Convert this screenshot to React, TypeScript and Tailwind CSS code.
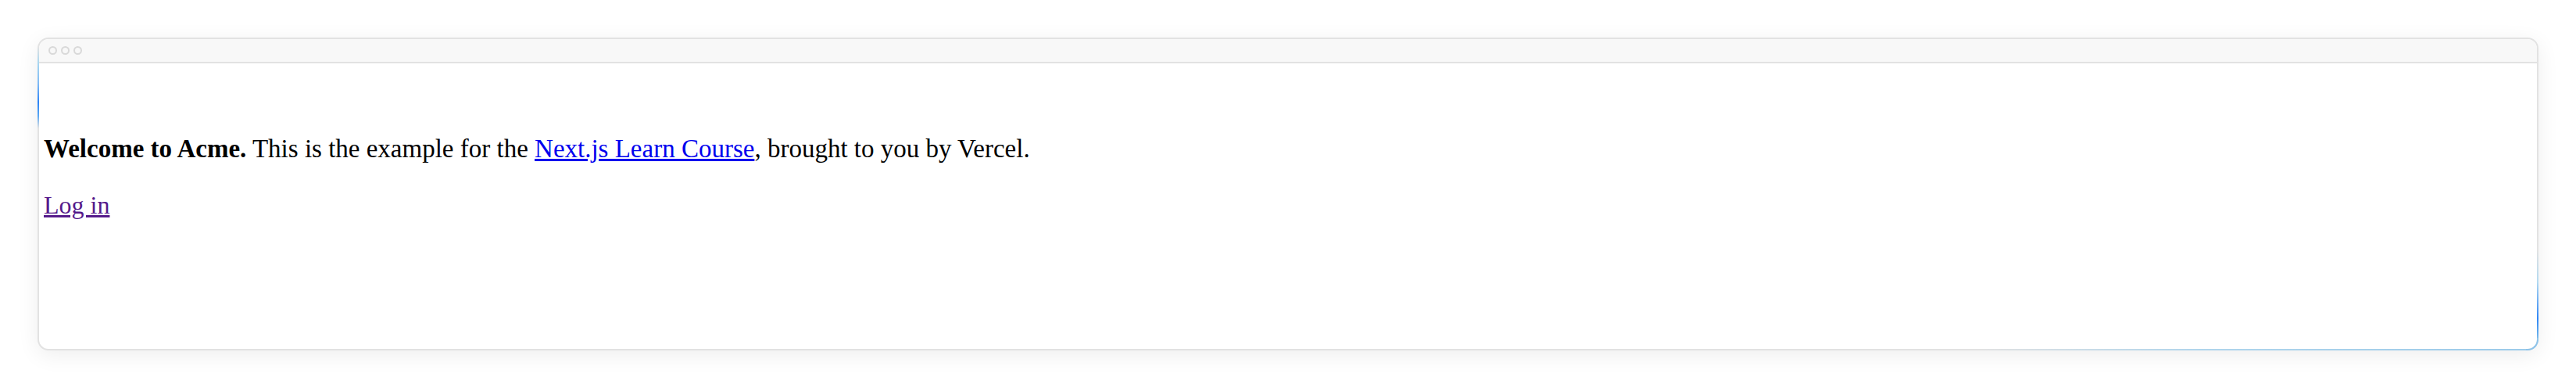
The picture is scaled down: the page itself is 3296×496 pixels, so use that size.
export default function App() {
  return (
    <div className="w-[3296px] h-[496px] bg-white p-[48px]">
      <div className="relative w-[3200px] h-[400px] rounded-[14px] border-2 border-[#e2e2e2] bg-white shadow-[0_6px_28px_rgba(0,0,0,0.07)]">
        <div className="h-[31px] bg-[#f8f8f8] border-b-2 border-[#e2e2e2] rounded-t-[12px] flex items-center pl-[12px] gap-[5px]">
          <span className="w-[11px] h-[11px] rounded-full border-2 border-[#d9d9d9]" />
          <span className="w-[11px] h-[11px] rounded-full border-2 border-[#d9d9d9]" />
          <span className="w-[11px] h-[11px] rounded-full border-2 border-[#d9d9d9]" />
        </div>
        <div className="pl-[6px] pt-[89px]">
          <p className="text-[33px] leading-[40px] text-black mb-[32px] font-['Liberation_Serif',serif]">
            <strong className="font-bold">Welcome to Acme.</strong> This is the example for the{" "}
            <a href="#" className="text-[#0000ee] underline">Next.js Learn Course</a>, brought to you by Vercel.
          </p>
          <div className="text-[32px] leading-[40px] font-['Liberation_Serif',serif]">
            <a href="#" className="text-[#551a8b] underline">Log in</a>
          </div>
        </div>

        {/* border beams */}
        <div className="absolute left-[-2px] top-[10px] w-[2px] h-[104px] bg-[linear-gradient(to_bottom,rgba(160,210,240,0),#a8d6f0_20%,#7fbaf5_45%,#2d84f6_68%,#5aa7f3_85%,rgba(160,210,240,0))]" />
        <div className="absolute right-[-2px] top-[270px] w-[2px] h-[116px] bg-[linear-gradient(to_bottom,rgba(170,215,240,0),#b3daf1_35%,#2f86f6_75%,#5ea8ee_90%,#8cc3ea)]" />
        <div className="absolute right-[-2px] bottom-[-2px] w-[16px] h-[16px] border-r-2 border-b-2 border-[#8cc3ea] rounded-br-[14px]" />
        <div className="absolute right-[14px] bottom-[-2px] w-[700px] h-[2px] bg-[linear-gradient(to_right,rgba(170,210,235,0),#b0d5ec_40%,#9ccbea)]" />
      </div>
    </div>
  );
}
